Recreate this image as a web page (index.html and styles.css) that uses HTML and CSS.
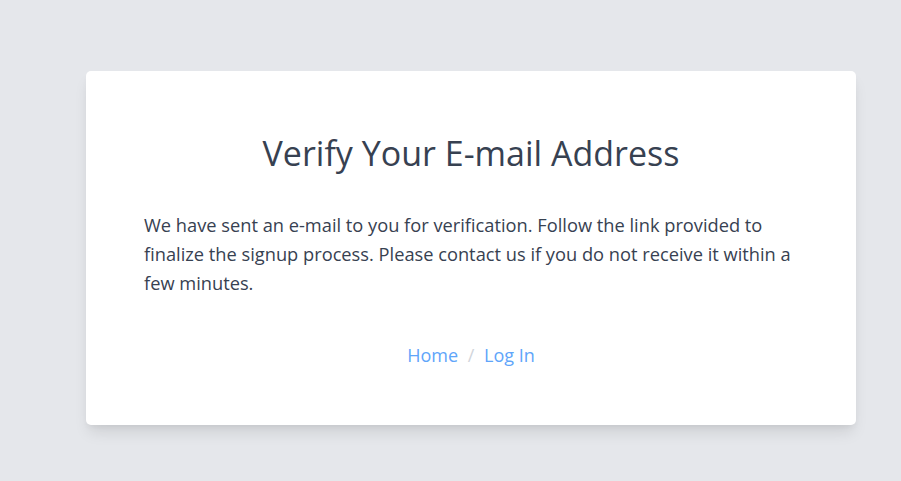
FILE: index.html
```html
<!DOCTYPE html>
<html lang="en">
<head>
<meta charset="utf-8">
<title>Verify Your E-mail Address</title>
<link rel="stylesheet" href="styles.css">
</head>
<body>
<main class="page">
  <section class="card">
    <h1 class="title">Verify Your E-mail Address</h1>
    <p class="message">We have sent an e-mail to you for verification. Follow the link provided to finalize the signup process. Please contact us if you do not receive it within a few minutes.</p>
    <nav class="links">
      <a href="#" class="link">Home</a>
      <span class="sep">/</span>
      <a href="#" class="link">Log In</a>
    </nav>
  </section>
</main>
</body>
</html>
```

FILE: styles.css
```css
html, body {
  margin: 0;
  padding: 0;
}
body {
  background: #e5e7eb;
  font-family: "Open Sans", "Noto Sans", sans-serif;
  color: #374151;
  width: 901px;
  height: 481px;
  overflow: hidden;
}
.page {
  padding: 71px 0 0 86px;
}
.card {
  box-sizing: border-box;
  width: 770px;
  height: 354px;
  background: #ffffff;
  border-radius: 5px;
  box-shadow: 0 10px 15px -3px rgba(0,0,0,0.1), 0 4px 6px -2px rgba(0,0,0,0.05);
  padding: 58px 58px 0 58px;
}
.title {
  margin: 0;
  text-align: center;
  font-weight: 400;
  font-size: 34px;
  line-height: 48px;
  color: #374151;
}
.message {
  margin: 33px 0 0 0;
  font-size: 18.25px;
  line-height: 29px;
  color: #374151;
}
.links {
  margin-top: 46px;
  text-align: center;
  font-size: 18px;
  line-height: 24px;
}
.link {
  color: #60a5fa;
  text-decoration: none;
}
.sep {
  color: #d1d5db;
  margin: 0 5px;
}
```
